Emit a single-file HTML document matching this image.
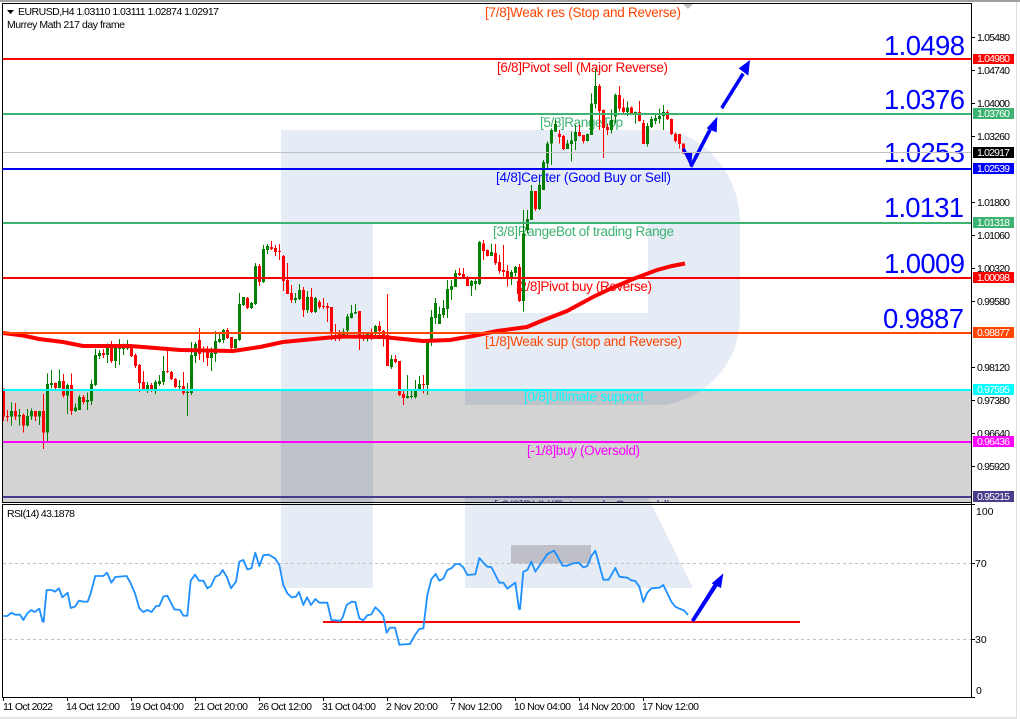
<!DOCTYPE html>
<html><head><meta charset="utf-8"><style>
html,body{margin:0;padding:0;background:#fff}
svg{display:block}
text{font-family:"Liberation Sans",sans-serif}
.s{font-size:10.500px;fill:#000}
.w{font-size:10.500px;fill:#fff}
.l{font-size:13.500px}
.b{font-size:27.500px;fill:#0000ff}
</style></head><body>
<svg width="1020" height="719" viewBox="0 0 1020 719" xmlns="http://www.w3.org/2000/svg">
<defs><clipPath id="c"><rect x="3" y="4" width="968" height="498"/></clipPath></defs>
<rect width="1020" height="719" fill="#fff"/>
<rect x="0" y="0" width="1020" height="2" fill="#a0a0a0"/>
<rect x="1017" y="2" width="3" height="717" fill="#fff"/>
<rect x="1016" y="2" width="1" height="715" fill="#e0e0e0"/>
<rect x="0" y="717" width="1017" height="2" fill="#e4e4e4"/>

<!-- zone -->
<rect x="3" y="391" width="968" height="111" fill="#d3d3d3"/>

<!-- watermark -->
<g fill="#e6ecf5" style="mix-blend-mode:multiply">
<path d="M281 130H660C705 132 740 175 740 222V317C740 365 705 398 665 405H465V313H648V224H373V588H281Z"/>
<path d="M465 497H648L693 588H465Z"/>
</g>
<rect x="511" y="545" width="80" height="18.500" fill="#bebfc7"/>

<!-- level text -->
<g clip-path="url(#c)">
<text class="l" x="485" y="17" textLength="196" fill="#ff4500">[7/8]Weak res (Stop and Reverse)</text>
<text class="l" x="497" y="72" textLength="171" fill="#ff0000">[6/8]Pivot sell (Major Reverse)</text>
<text class="l" x="540" y="127" textLength="83" fill="#3cb371">[5/8]RangeTop</text>
<text class="l" x="496" y="182" textLength="175" fill="#0000ff">[4/8]Center (Good Buy or Sell)</text>
<text class="l" x="493" y="236" textLength="181" fill="#3cb371">[3/8]RangeBot of trading Range</text>
<text class="l" x="516" y="291" textLength="136" fill="#ff0000">[2/8]Pivot buy (Reverse)</text>
<text class="l" x="485" y="346" textLength="197" fill="#ff4500">[1/8]Weak sup (stop and Reverse)</text>
<text class="l" x="524" y="401" textLength="120" fill="#00ffff">[0/8]Ultimate support</text>
<text class="l" x="527" y="455" textLength="113" fill="#ff00ff">[-1/8]buy (Oversold)</text>
<text class="l" x="494" y="510" textLength="177" fill="#483d8b">[-2/8]BUY(Extremely Oversold)</text>
</g>
<polygon points="683,4 693,4 688,9" fill="#c0c0c0"/>

<!-- big levels -->
<text class="b" x="884" y="55" textLength="81">1.0498</text>
<text class="b" x="884" y="109" textLength="81">1.0376</text>
<text class="b" x="884" y="162" textLength="81">1.0253</text>
<text class="b" x="884" y="217" textLength="80">1.0131</text>
<text class="b" x="884" y="273" textLength="81">1.0009</text>
<text class="b" x="883" y="328" textLength="81">0.9887</text>

<!-- candles A -->
<g transform="translate(.167 240) scale(.33333)" fill="none" shape-rendering="crispEdges">
<path stroke="#007f00" stroke-width="3" d="M34 487V557M58 507V557M82 507V560M94 505V540M118 513V555M142 400V603M154 390V445M178 388V445M202 430V522M226 490V516M238 465V510M262 457V510M274 418V495M286 327V438M298 330V357M322 310V369M346 315V384M358 297V375M370 310V345M382 300V330M442 426V459M466 420V462M478 405V438M490 348V435M538 420V450M562 429V528M574 306V465M586 306V369M634 322V393M646 273V366M658 279V309M670 267V309M706 297V327M718 159V303M730 171V198M754 186V207M766 69V195M790 15V129M802 12V42M886 159V189M898 132V180M922 153V219M946 171V219"/>
<path stroke="#007f00" stroke-width="9" d="M34 513V530M58 525V530M82 528V557M94 513V530M118 513V530M142 432V578M154 429V435M178 423V444M202 435V467M226 502V513M238 471V510M262 480V486M274 432V483M286 345V435M298 339V348M322 322V345M346 322V363M358 322V327M370 322V327M382 322V325M442 435V447M466 426V447M478 423V432M490 393V426M538 438V441M562 456V459M574 345V459M586 312V348M634 339V354M646 303V342M658 297V306M670 270V300M706 297V324M718 192V300M730 171V195M754 189V204M766 78V192M790 27V126M802 18V30M886 174V180M898 150V177M922 171V210M946 174V216"/>
<path stroke="#ff0000" stroke-width="3" d="M10 445V543M22 510V545M46 489V540M70 520V578M106 513V543M130 462V627M166 428V447M190 402V473M214 400V525M250 465V492M310 327V354M334 303V369M394 318V351M406 340V384M418 372V456M430 393V450M454 429V456M502 330V399M514 393V420M526 414V444M550 396V465M598 264V360M610 320V366M622 318V378M682 264V297M694 291V333M742 171V207M778 72V138M814 3V30M826 15V48M838 12V60M850 45V153M862 69V162M874 135V189M910 141V231M934 144V219M958 180V207M970 174V207M982 189V246M994 201V300M1006 252V303M1018 270V303"/>
<path stroke="#ff0000" stroke-width="9" d="M10 445V530M22 528V531M46 513V530M70 525V557M106 513V530M130 513V578M166 429V444M190 423V467M214 435V513M250 471V486M310 339V345M334 322V363M394 322V348M406 345V378M418 375V429M430 426V447M454 435V447M502 393V396M514 396V417M526 417V441M550 438V459M598 300V342M610 330V336M622 330V354M682 270V294M694 291V324M742 174V204M778 78V126M814 21V27M826 24V36M838 33V36M850 48V123M862 120V162M874 159V180M910 150V210M934 171V216M958 186V201M970 198V201M982 198V204M994 201V279M1006 285V294M1018 279V297"/>
</g>
<!-- candles B -->
<g transform="translate(340.167 240) scale(.33333)" fill="none" shape-rendering="crispEdges">
<path stroke="#007f00" stroke-width="3" d="M10 265V290M22 222V290M34 195V235M46 192V222M82 280V305M106 255V285M154 345V387M202 405V475M214 450V475M226 420V475M238 408V450M262 300V465M274 210V318M286 174V252M298 200V252M310 180V234M322 120V234M334 120V180M346 90V141M394 120V168M406 114V150M418 3V135M454 10V48M514 90V135M526 78V110M550 -90V215"/>
<path stroke="#007f00" stroke-width="9" d="M10 275V285M22 230V272M34 219V234M46 216V221M82 282V297M106 258V276M154 357V381M202 468V474M214 468V471M226 450V471M238 432V447M262 306V435M274 231V306M286 189V234M298 222V252M310 204V225M322 147V207M334 138V150M346 99V141M394 123V138M406 123V132M418 6V132M454 36V48M514 96V114M526 81V99M550 -20V183"/>
<path stroke="#ff0000" stroke-width="3" d="M58 213V330M70 280V303M94 265V300M118 243V285M130 270V320M142 162V378M166 345V370M178 363V468M190 450V495M250 405V460M358 84V108M370 84V114M382 108V138M430 0V60M442 28V50M466 12V75M478 45V100M490 15V110M502 75V140M538 72V186"/>
<path stroke="#ff0000" stroke-width="9" d="M58 213V285M70 285V297M94 280V285M118 258V273M130 273V285M142 285V378M166 357V366M178 363V465M190 462V474M250 432V435M358 99V105M370 102V114M382 114V138M430 10V33M442 30V48M466 39V69M478 66V93M490 90V96M502 93V114M538 81V183"/>
</g>
<!-- candles C -->
<g transform="translate(340.167 0) scale(.33333)" fill="none" shape-rendering="crispEdges">
<path stroke="#007f00" stroke-width="3" d="M562 630V700M574 555V660M598 545V630M610 480V570M622 425V505M634 385V495M646 360V396M682 420V447M694 395V485M706 375V450M742 400V425M754 280V405M766 207V325M814 328V400M826 280V370M862 305V348M886 335V370M922 369V440M934 350V384M946 345V372M958 325V370M970 315V390"/>
<path stroke="#007f00" stroke-width="9" d="M562 657V690M574 573V660M598 555V627M610 486V570M622 430V490M634 390V430M646 372V394M682 430V447M694 421V432M706 396V423M742 402V423M754 310V405M766 258V312M814 360V390M826 285V350M862 322V336M886 336V339M922 378V432M934 357V381M946 354V363M958 348V357M970 336V348"/>
<path stroke="#ff0000" stroke-width="3" d="M586 573V633M658 390V430M670 405V450M718 375V410M730 405V430M778 252V390M790 328V474M802 370V405M838 258V335M850 295V340M874 320V345M898 303V365M910 360V432M982 330V360M994 355V405M1006 398V428M1018 402V445M1030 430V460"/>
<path stroke="#ff0000" stroke-width="9" d="M586 573V627M658 402V411M670 408V447M718 396V408M730 405V423M778 258V333M790 330V384M802 381V390M838 285V325M850 322V336M874 322V339M898 336V363M910 369V432M982 336V357M994 357V402M1006 402V423M1018 402V432M1030 430V460"/>
</g>

<!-- MA -->
<polyline fill="none" stroke="#ff0000" stroke-width="4" points="3,333 23,335.500 39,339 63,342 83,346 130,346 143,347 180,350 233,351 260,347 283,342 340,336.500 383,337 403,339 423,341 450,340 473,336 497,331 527,327 540,321.500 567,311 593,297 610,289 633,279 657,270 672,266 685,263.500"/>

<!-- arrows -->
<g transform="translate(680 0) scale(.33333)" fill="#0000ff" stroke="none">
<path d="M6 448L14 444L32 478L24 481Z"/>
<polygon points="33,503 12,458 37,459"/>
<path d="M28 497L37 503L95 392L85 387Z"/>
<polygon points="112,350 80,385 110,397"/>
<path d="M121 321L129 328L194 224L185 218Z"/>
<polygon points="210,180 176,205 205,227"/>
</g>

<!-- lines -->
<g shape-rendering="crispEdges">
<rect x="3" y="58" width="968" height="2" fill="#ff0000"/>
<rect x="3" y="113" width="968" height="2" fill="#3cb371"/>
<rect x="3" y="168" width="968" height="2" fill="#0000ff"/>
<rect x="3" y="222" width="968" height="2" fill="#3cb371"/>
<rect x="3" y="277" width="968" height="2" fill="#ff0000"/>
<rect x="3" y="332" width="968" height="2" fill="#ff4500"/>
<rect x="3" y="389" width="968" height="2" fill="#00ffff"/>
<rect x="3" y="441" width="968" height="2" fill="#ff00ff"/>
<rect x="3" y="496" width="968" height="2" fill="#483d8b"/>
<rect x="3" y="152" width="968" height="1" fill="#c0c0c0"/>
</g>

<!-- RSI -->
<g stroke="#c0c0c0" stroke-dasharray="3 3" shape-rendering="crispEdges">
<line x1="3" y1="563.500" x2="971" y2="563.500"/>
<line x1="3" y1="639.500" x2="971" y2="639.500"/>
</g>
<rect x="323" y="621" width="477" height="2" fill="#ff0000" shape-rendering="crispEdges"/>
<g fill="none" stroke="#1e90ff" stroke-width="5.500" stroke-linejoin="round">
<polyline transform="translate(0 480) scale(.33333)" points="10,408 22,408 34,398 46,404 60,404 70,420 82,400 94,390 104,396 118,386 128,425 131,425 136,370 140,330 155,330 165,335 177,325 187,352 203,338 212,384 225,380 237,362 250,365 263,365 272,340 286,288 310,288 321,278 334,308 346,291 380,288 392,310 405,340 418,385 430,396 442,390 455,396 468,378 478,378 490,350 502,347 523,388 540,390 550,407 562,407 572,302 585,284 597,302 610,302 622,325 633,318 646,290 658,285 668,270 680,290 693,325 708,305 718,245 730,240 742,268 754,265 766,218 778,258 790,226 806,224 825,235 838,255 850,315 862,340 875,352 888,350 897,336 910,375 921,352 933,375 946,357 958,368 982,368 994,420 1018,422 1021,425"/>
<polyline transform="translate(340 480) scale(.33333)" points="0,425 8,412 20,375 35,365 46,366 58,415 70,421 82,406 94,403 106,382 118,393 130,408 140,458 150,443 165,443 178,494 210,492 225,465 238,447 250,445 262,345 274,298 287,282 298,302 310,296 322,270 334,265 346,252 358,252 370,262 382,285 406,283 418,234 430,248 442,260 454,261 478,308 490,308 502,326 526,308 537,387 540,387 550,275 562,270 574,245 586,275 610,240 622,222 642,212 650,225 668,257 682,257 700,250 716,248 730,262 742,258 754,228 766,212 778,255 790,299 806,299 826,264 838,290 862,293 874,301 886,303 898,320 910,366 922,338 934,325 958,323 970,315 994,365 1006,380 1018,386 1032,391 1044,405"/>
</g>
<g transform="translate(680 480) scale(.33333)" fill="#0000ff">
<path d="M33 420L42 427L114 316L103 309Z"/>
<polygon points="130,280 95,310 123,324"/>
</g>

<!-- frames -->
<g fill="#000" shape-rendering="crispEdges">
<rect x="2" y="3" width="970" height="1"/>
<rect x="2" y="3" width="1" height="499"/>
<rect x="971" y="3" width="1" height="695"/>
<rect x="2" y="502" width="970" height="1"/>
<rect x="2" y="504" width="970" height="1"/>
<rect x="2" y="504" width="1" height="194"/>
<rect x="2" y="697" width="970" height="1"/>
<path d="M972 37h3v1h-3zM972 70h3v1h-3zM972 103h3v1h-3zM972 136h3v1h-3zM972 202h3v1h-3zM972 235h3v1h-3zM972 268h3v1h-3zM972 301h3v1h-3zM972 367h3v1h-3zM972 400h3v1h-3zM972 433h3v1h-3zM972 466h3v1h-3zM972 504h3v1h-3zM972 563h3v1h-3zM972 639h3v1h-3zM972 697h3v1h-3zM3 698h1v3h-1zM67 698h1v3h-1zM131 698h1v3h-1zM195 698h1v3h-1zM259 698h1v3h-1zM323 698h1v3h-1zM387 698h1v3h-1zM451 698h1v3h-1zM515 698h1v3h-1zM579 698h1v3h-1zM643 698h1v3h-1z"/>
</g>

<!-- header -->
<polygon points="7,10 14,10 10.500,14" fill="#000"/>
<text class="s" x="18" y="15" textLength="201">EURUSD,H4  1.03110 1.03111 1.02874 1.02917</text>
<text class="s" x="7" y="28" textLength="118">Murrey Math 217 day frame</text>
<text class="s" x="7" y="517" textLength="68">RSI(14) 43.1878</text>

<!-- axis -->
<g class="s">
<text class="s" x="977" y="41" textLength="33">1.05480</text>
<text class="s" x="977" y="74" textLength="33">1.04740</text>
<text class="s" x="977" y="107" textLength="33">1.04000</text>
<text class="s" x="977" y="140" textLength="33">1.03260</text>
<text class="s" x="977" y="206" textLength="33">1.01800</text>
<text class="s" x="977" y="239" textLength="33">1.01060</text>
<text class="s" x="977" y="272" textLength="33">1.00320</text>
<text class="s" x="977" y="305" textLength="33">0.99580</text>
<text class="s" x="977" y="371" textLength="33">0.98120</text>
<text class="s" x="977" y="404" textLength="33">0.97380</text>
<text class="s" x="977" y="437" textLength="33">0.96640</text>
<text class="s" x="977" y="470" textLength="33">0.95920</text>
<text class="s" x="976" y="515">100</text>
<text class="s" x="975" y="567">70</text>
<text class="s" x="975" y="643">30</text>
<text class="s" x="976" y="694">0</text>
</g>
<g shape-rendering="crispEdges">
<rect x="973" y="54" width="41" height="10" fill="#ff0000"/>
<rect x="973" y="108" width="41" height="11" fill="#3cb371"/>
<rect x="973" y="147" width="41" height="11" fill="#000"/>
<rect x="973" y="163" width="41" height="11" fill="#0000ff"/>
<rect x="973" y="217" width="41" height="11" fill="#3cb371"/>
<rect x="973" y="272" width="41" height="11" fill="#ff0000"/>
<rect x="973" y="327" width="41" height="11" fill="#ff4500"/>
<rect x="973" y="384" width="41" height="11" fill="#00ffff"/>
<rect x="973" y="436" width="41" height="11" fill="#ff00ff"/>
<rect x="973" y="491" width="41" height="11" fill="#483d8b"/>
</g>
<text class="w" x="977" y="62" textLength="33">1.04980</text>
<text class="w" x="977" y="117" textLength="33">1.03760</text>
<text class="w" x="977" y="156" textLength="33">1.02917</text>
<text class="w" x="977" y="172" textLength="33">1.02539</text>
<text class="w" x="977" y="226" textLength="33">1.01318</text>
<text class="w" x="977" y="281" textLength="33">1.00098</text>
<text class="w" x="977" y="336" textLength="33">0.98877</text>
<text class="w" x="977" y="393" textLength="33">0.97595</text>
<text class="w" x="977" y="445" textLength="33">0.96436</text>
<text class="w" x="977" y="500" textLength="33">0.95215</text>

<!-- time -->
<text class="s" x="3" y="710" textLength="50">11 Oct 2022</text>
<text class="s" x="66" y="710" textLength="54">14 Oct 12:00</text>
<text class="s" x="130" y="710" textLength="54">19 Oct 04:00</text>
<text class="s" x="194" y="710" textLength="54">21 Oct 20:00</text>
<text class="s" x="258" y="710" textLength="54">26 Oct 12:00</text>
<text class="s" x="322" y="710" textLength="54">31 Oct 04:00</text>
<text class="s" x="386" y="710" textLength="52">2 Nov 20:00</text>
<text class="s" x="450" y="710" textLength="52">7 Nov 12:00</text>
<text class="s" x="514" y="710" textLength="57">10 Nov 04:00</text>
<text class="s" x="578" y="710" textLength="57">14 Nov 20:00</text>
<text class="s" x="642" y="710" textLength="57">17 Nov 12:00</text>
</svg>
</body></html>
